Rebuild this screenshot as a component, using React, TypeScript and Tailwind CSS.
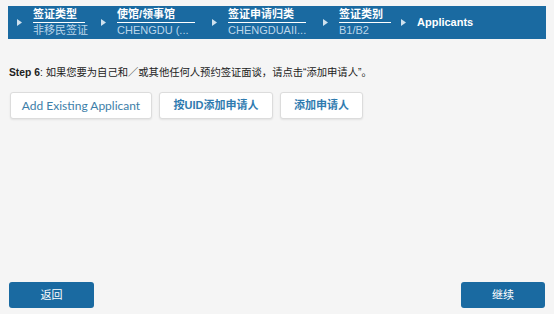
import React from 'react';

const steps = [
  { title: '签证类型', sub: '非移民签证', w: 'w-[84px]', line: 'w-[52px]' },
  { title: '使馆/领事馆', sub: 'CHENGDU (...', w: 'w-[111px]', line: 'w-[78px]' },
  { title: '签证申请归类', sub: 'CHENGDUAII...', w: 'w-[111px]', line: 'w-[78px]' },
  { title: '签证类别', sub: 'B1/B2', w: 'w-[78px]', line: 'w-[52px]' },
];

const Arrow = () => (
  <svg width="5" height="7" viewBox="0 0 5 7" className="ml-[9px] mr-[11px]">
    <path d="M0 0 L5 3.5 L0 7 Z" fill="#cfe1ee" />
  </svg>
);

export default function App() {
  return (
    <div
      className="w-[554px] h-[314px] bg-[#f5f5f5] flex flex-col px-[8px] pt-[6px] pb-[6px]"
      style={{ fontFamily: '"Liberation Sans", "Noto Sans CJK SC", sans-serif' }}
    >
      <div className="h-[33px] bg-[#1a6aa1] flex items-center">
        {steps.map((s) => (
          <div key={s.title} className={`${s.w} shrink-0 flex items-center`}>
            <Arrow />
            <div className="flex flex-col">
              <span className={`${s.line} text-white text-[11px] font-bold leading-[13px] border-b border-white pb-[1px]`}>
                {s.title}
              </span>
              <span className="text-[#bcd6ea] text-[11px] leading-[13px] mt-[1px] whitespace-nowrap">{s.sub}</span>
            </div>
          </div>
        ))}
        <Arrow />
        <span className="text-white text-[11px] font-bold">Applicants</span>
      </div>

      <p className="mt-[27px] ml-[1px] text-[10.3px] text-[#222] leading-[14px]">
        <span className="font-bold">Step 6</span>: 如果您要为自己和／或其他任何人预约签证面谈，请点击“添加申请人”。
      </p>

      <div className="mt-[12px] ml-[2px] flex gap-[7px]">
        <button
          className="h-[27px] w-[142px] bg-white border border-[#dcdcdc] rounded-[3px] shadow-[0_1px_2px_rgba(0,0,0,0.08)] text-[#3d7ea8] text-[12px]"
          style={{ fontFamily: 'Lato, "Noto Sans CJK SC", sans-serif' }}
        >
          Add Existing Applicant
        </button>
        <button className="h-[27px] w-[114px] bg-white border border-[#dcdcdc] rounded-[3px] shadow-[0_1px_2px_rgba(0,0,0,0.08)] text-[#2f7bb0] text-[11px] font-bold">
          按UID添加申请人
        </button>
        <button className="h-[27px] w-[83px] bg-white border border-[#dcdcdc] rounded-[3px] shadow-[0_1px_2px_rgba(0,0,0,0.08)] text-[#2f7bb0] text-[11px] font-bold">
          添加申请人
        </button>
      </div>

      <div className="mt-auto flex justify-between px-[1px]">
        <button className="h-[26px] w-[85px] bg-[#1a6aa1] rounded-[3px] text-white text-[11px]">返回</button>
        <button className="h-[26px] w-[84px] bg-[#1a6aa1] rounded-[3px] text-white text-[11px]">继续</button>
      </div>
    </div>
  );
}
